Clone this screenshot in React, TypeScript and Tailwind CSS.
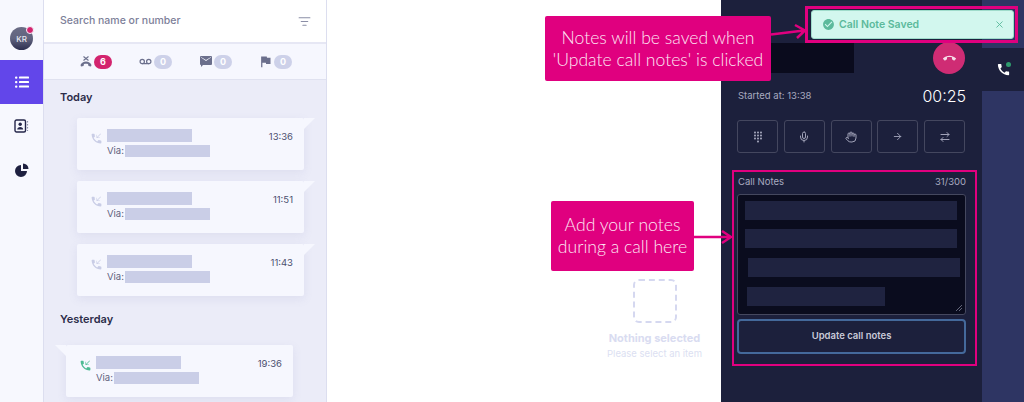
import { ArrowRight, ArrowRightLeft, Hand, ListFilter, Mic, Voicemail, X } from "lucide-react";
import { MdCall, MdCallEnd, MdCheckCircle, MdDialpad, MdFlag, MdPhoneCallback } from "react-icons/md";
import type { ReactNode } from "react";

const uiFont = "font-['Inter','Liberation_Sans',sans-serif]";
const noteFont = "font-['Lato','Open_Sans',sans-serif]";

function Badge({ value, hot }: { value: number; hot?: boolean }) {
  return (
    <span
      className={`flex h-[14px] w-[18px] items-center justify-center rounded-full text-[9px] font-bold ${
        hot ? "bg-[#d3246e] text-white" : "bg-[#cdd1e9] text-white"
      }`}
    >
      {value}
    </span>
  );
}

function FilterTab({ icon, value, hot }: { icon: ReactNode; value: number; hot?: boolean }) {
  return (
    <div className="flex items-center gap-[3px] text-[#6b6f8c]">
      <span className="flex w-[11px] justify-center">{icon}</span>
      <Badge value={value} hot={hot} />
    </div>
  );
}

function CallCard({ time, side = "right", answered }: { time: string; side?: "left" | "right"; answered?: boolean }) {
  return (
    <div
      className={`relative h-[52px] w-[227px] rounded-[2px] bg-[#f6f7fe] pt-[11px] pl-[30px] shadow-[0_3px_10px_rgba(120,125,180,0.12)] ${
        side === "right" ? "ml-[33px]" : "ml-[22px]"
      }`}
    >
      {side === "right" ? (
        <span className="absolute top-0 left-full h-[11px] w-[11px] bg-[#f6f7fe] [clip-path:polygon(0_0,100%_0,0_100%)]" />
      ) : (
        <span className="absolute top-0 right-full h-[11px] w-[11px] bg-[#f6f7fe] [clip-path:polygon(100%_0,0_0,100%_100%)]" />
      )}
      <span className="absolute top-[14px] left-[13px]">
        <MdPhoneCallback size={13} className={answered ? "text-[#4dbb94]" : "text-[#c9cde6]"} />
      </span>
      <span className="absolute top-[12px] right-[11px] text-[9.5px] text-[#4b4f6e]">{time}</span>
      <div className="h-[13px] w-[85px] bg-[#cacee7]" />
      <div className="mt-[2px] flex items-center gap-[2px]">
        <span className="w-[16px] text-[9.5px] text-[#5f6380]">Via:</span>
        <div className="h-[12px] w-[85px] bg-[#cacee7]" />
      </div>
    </div>
  );
}

function ActionButton({ children }: { children: ReactNode }) {
  return (
    <button
      type="button"
      className="flex h-[33px] w-[41px] items-center justify-center rounded-[3px] border border-[#44475f] text-[#a0a2b8]"
    >
      {children}
    </button>
  );
}

function NoteBar({ className }: { className: string }) {
  return <div className={`h-[19px] bg-[#1f2340] ${className}`} />;
}

export default function App() {
  return (
    <div className={`relative flex h-[402px] w-[1024px] overflow-hidden bg-white ${uiFont}`}>
      {/* left nav */}
      <nav className="flex w-[44px] shrink-0 flex-col border-r border-[#dcdeef] bg-[#f7f8fe] pt-[27px]">
        <div className="relative mx-auto flex h-[23px] w-[23px] items-center justify-center rounded-full bg-linear-to-b from-[#6a6c85] via-[#62647f] to-[#2d2f50] text-[8px] font-medium text-[#e8e8f0]">
          KR
          <span className="absolute -top-[1px] -right-[1px] h-[8px] w-[8px] rounded-full border border-[#f7f8fe] bg-[#d3246e]" />
        </div>
        <div className="mt-[10px] flex h-[44px] items-center justify-center bg-[#6246ea] text-white">
          <svg width="14" height="12" viewBox="0 0 14 12" fill="currentColor">
            <rect x="0" y="0.5" width="2.4" height="2.2" rx="1" />
            <rect x="4" y="0.5" width="10" height="2" rx="0.6" />
            <rect x="0" y="5" width="2.4" height="2.2" rx="1" />
            <rect x="4" y="5" width="10" height="2" rx="0.6" />
            <rect x="0" y="9.5" width="2.4" height="2.2" rx="1" />
            <rect x="4" y="9.5" width="10" height="2" rx="0.6" />
          </svg>
        </div>
        <div className="flex h-[44px] items-center justify-center text-[#24264a]">
          <svg width="15" height="14" viewBox="0 0 15 14" fill="none">
            <rect x="1" y="1" width="10.5" height="12" rx="1.5" stroke="currentColor" strokeWidth="1.4" />
            <circle cx="6.2" cy="5.2" r="1.7" fill="currentColor" />
            <path d="M3.2 10.6c0-1.8 1.4-2.7 3-2.7s3 .9 3 2.7Z" fill="currentColor" />
            <path d="M13.5 2v1.4M13.5 5v1.4M13.5 8v1.4M13.5 11v1" stroke="#8d90aa" strokeWidth="1.2" />
          </svg>
        </div>
        <div className="flex h-[44px] items-center justify-center text-[#1e2040]">
          <svg width="14" height="14" viewBox="0 0 14 14" fill="currentColor">
            <path d="M6 2a6 6 0 1 0 6 6H6Z" />
            <path d="M8 0.5a5.5 5.5 0 0 1 5.5 5.5H8Z" />
          </svg>
        </div>
      </nav>

      {/* call list */}
      <section className="flex w-[283px] shrink-0 flex-col border-r border-[#dcdeef] bg-[#ebecf8]">
        <header className="flex h-[44px] shrink-0 items-center justify-between border-b-2 border-[#e6e7f4] bg-white pr-[15px] pl-[16px]">
          <span className="text-[10.5px] font-medium text-[#7d8099]">Search name or number</span>
          <ListFilter size={13} className="text-[#8b8ea6]" />
        </header>
        <div className="flex h-[36px] shrink-0 items-center justify-center gap-[28px] border-b border-[#e0e2f0] bg-[#f6f7fe] pl-[2px]">
          <FilterTab
            icon={
              <svg width="12" height="11" viewBox="0 0 24 22" className="shrink-0" fill="currentColor">
                <path d="M1 18c2-4 6-7 11-7s9 3 11 7l-1 3-5-1-1-4c-3-1-5-1-8 0l-1 4-5 1Z" />
                <path d="M7 1l10 8M17 1L7 9" fill="none" stroke="currentColor" strokeWidth="2.2" />
              </svg>
            }
            value={6}
            hot
          />
          <FilterTab icon={<Voicemail size={13} strokeWidth={2.2} className="shrink-0" />} value={0} />
          <FilterTab
            icon={
              <svg width="12" height="11" viewBox="0 0 12 11" className="shrink-0" fill="currentColor">
                <path d="M1 0h10a1 1 0 0 1 1 1v7a1 1 0 0 1-1 1H3l-2 2V9a1 1 0 0 1-1-1V1a1 1 0 0 1 1-1Zm0 1.6L6 5l5-3.4V1L6 4 1 1v.6Z" />
              </svg>
            }
            value={0}
          />
          <FilterTab icon={<MdFlag size={15} className="shrink-0" />} value={0} />
        </div>
        <div className="flex flex-col">
          <h2 className="mt-[9px] ml-[16px] text-[11px] leading-[16px] font-semibold text-[#2b2d4a]">Today</h2>
          <div className="mt-[13px] flex flex-col gap-[11px]">
            <CallCard time="13:36" />
            <CallCard time="11:51" />
            <CallCard time="11:43" />
          </div>
          <h2 className="mt-[15px] ml-[16px] text-[11px] leading-[16px] font-semibold text-[#2b2d4a]">Yesterday</h2>
          <div className="mt-[18px]">
            <CallCard time="19:36" side="left" answered />
          </div>
        </div>
      </section>

      {/* empty state, mostly behind the call panel */}
      <main className="flex flex-1 flex-col items-center pt-[279px]">
        <div className="h-[44px] w-[44px] rounded-[6px] border-2 border-dashed border-[#d5d8f0]" />
        <p className="mt-[8px] text-[11px] leading-[14px] font-bold text-[#d9dcf1]">Nothing selected</p>
        <p className="mt-[2px] text-[9.5px] leading-[14px] text-[#dcdff2]">Please select an item</p>
      </main>

      {/* right strip */}
      <aside className="w-[42px] shrink-0 bg-[#2e3563] pt-[48px]">
        <div className="relative flex h-[43px] items-center justify-center bg-[#1c203c] text-white">
          <MdCall size={15} />
          <span className="absolute top-[14px] right-[13px] h-[5px] w-[5px] rounded-full bg-[#2f9a6d]" />
        </div>
      </aside>

      {/* active call panel */}
      <div className="absolute top-0 right-[42px] bottom-0 flex w-[261px] flex-col bg-[#1c203c]">
        <div className="mt-[42px] flex items-center justify-between pr-[17px] pl-px">
          <div className="h-[30px] w-[132px] bg-[#0a0b1d]" />
          <span className="flex h-[32px] w-[32px] items-center justify-center rounded-full bg-[#cf2c74] text-[#f5dce8]">
            <MdCallEnd size={13} />
          </span>
        </div>
        <div className="mt-[8px] flex h-[28px] items-center justify-between pr-[16px] pl-[17px]">
          <span className="text-[9.5px] text-[#a9abc0]">Started at: 13:38</span>
          <span className="text-[16px] font-light text-white">00:25</span>
        </div>
        <div className="mt-[10px] flex justify-between pr-[17px] pl-[16px]">
          <ActionButton>
            <MdDialpad size={12} />
          </ActionButton>
          <ActionButton>
            <Mic size={12} />
          </ActionButton>
          <ActionButton>
            <Hand size={12} />
          </ActionButton>
          <ActionButton>
            <ArrowRight size={11} />
          </ActionButton>
          <ActionButton>
            <ArrowRightLeft size={12} />
          </ActionButton>
        </div>
        <div className="mt-[22px] flex h-[14px] items-center justify-between pr-[16px] pl-[17px] text-[9.5px] text-[#a9abc0]">
          <span>Call Notes</span>
          <span>31/300</span>
        </div>
        <div className="relative mx-[16px] mt-[5px] flex h-[121px] flex-col rounded-[3px] border border-[#45485f] bg-[#0a0c1e] pt-[6px] pl-[7px]">
          <NoteBar className="w-[212px]" />
          <NoteBar className="mt-[9px] w-[212px]" />
          <NoteBar className="mt-[10px] ml-[3px] w-[212px]" />
          <NoteBar className="mt-[10px] ml-[2px] w-[138px]" />
          <svg className="absolute right-[3px] bottom-[3px]" width="6" height="6" viewBox="0 0 6 6" stroke="#7a7d92" strokeWidth="0.8">
            <path d="M0 6L6 0M3 6L6 3" />
          </svg>
        </div>
        <button
          type="button"
          className="mx-[16px] mt-[4px] h-[35px] rounded-[4px] border-2 border-[#44699b] text-[9.5px] font-semibold text-[#c9cad8]"
        >
          Update call notes
        </button>
      </div>

      {/* toast */}
      <div className="absolute top-[10px] left-[811px] flex h-[29px] w-[203px] items-center rounded-[3px] border border-[#9fdccb] bg-[#d2f7ee] pr-[8px] pl-[10px] text-[#5cba9c]">
        <MdCheckCircle size={13} />
        <span className="ml-[4px] text-[10.5px] font-semibold">Call Note Saved</span>
        <X size={11} className="ml-auto" />
      </div>

      {/* annotation overlays */}
      <div className="absolute top-[6px] left-[805px] h-[37px] w-[213px] border-[3px] border-[#e0007f]" />
      <div className="absolute top-[170px] left-[732px] h-[196px] w-[245px] border-2 border-[#e0007f]" />
      <div
        className={`absolute top-[16px] left-[545px] flex h-[65px] w-[226px] items-center justify-center rounded-[2px] bg-[#e0007f] text-center text-[17.6px] leading-[22px] font-light text-[#fde6f3] ${noteFont}`}
      >
        <span>
          Notes will be saved when
          <br />
          'Update call notes' is clicked
        </span>
      </div>
      <div
        className={`absolute top-[201px] left-[551px] flex h-[70px] w-[143px] items-center justify-center rounded-[2px] bg-[#e0007f] text-center text-[17.6px] leading-[22px] font-light text-[#fde6f3] ${noteFont}`}
      >
        <span>
          Add your notes
          <br />
          during a call here
        </span>
      </div>
      <svg className="absolute top-0 left-0" width="1024" height="402" fill="none" stroke="#e0007f" strokeWidth="2.5">
        <path d="M771 34.5 L804 30.5 M795 25 L805 30.5 L797 38" />
        <path d="M694 237 L731 237 M722 231 L731 237 L722 243" />
      </svg>
    </div>
  );
}
